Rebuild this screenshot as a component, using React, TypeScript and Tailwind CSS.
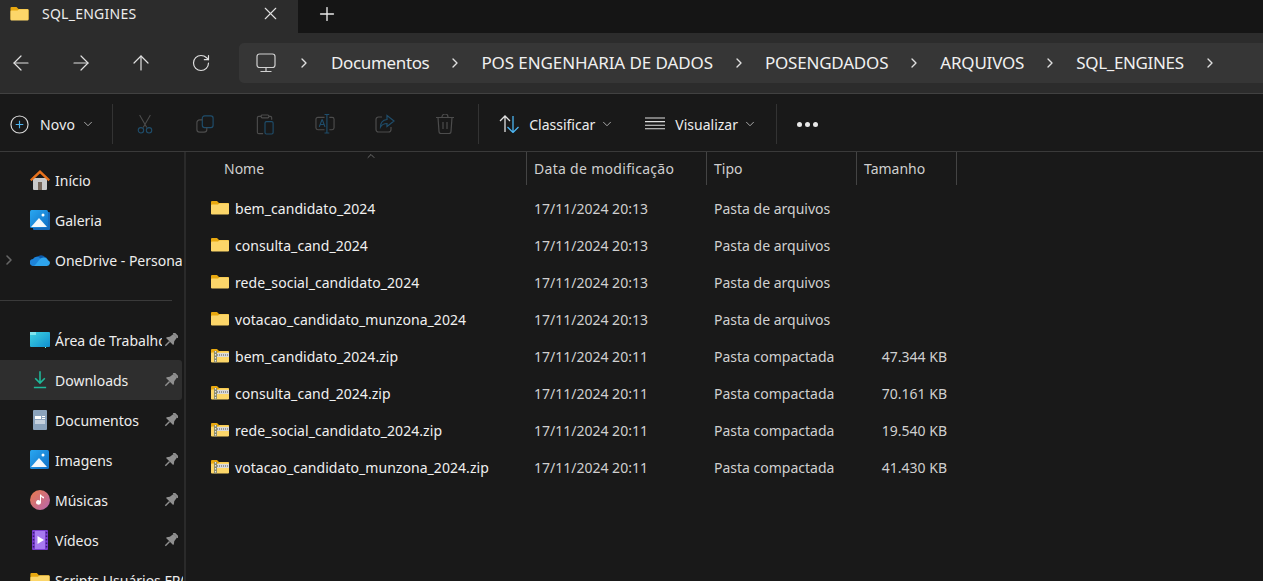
import React from 'react';
import { ArrowLeft, ArrowRight, ArrowUp, ChevronDown, ChevronRight, ChevronUp, Plus, RotateCw, X } from 'lucide-react';

const FONT = "font-['Noto_Sans',sans-serif]";

const FolderIcon: React.FC<{ className?: string }> = ({ className }) => (
    <svg viewBox="0 0 18 15" className={className}>
        <path d="M0 2a1 1 0 0 1 1-1h5l2 2h9a1 1 0 0 1 1 1v9a1 1 0 0 1-1 1H1a1 1 0 0 1-1-1z" fill="#e8a80f" />
        <path d="M0 5.500a1 1 0 0 1 1-1h6l1.600-1.200H17a1 1 0 0 1 1 1V13.500a1 1 0 0 1-1 1H1a1 1 0 0 1-1-1z" fill="#fcd669" />
    </svg>
);

const ZipIcon: React.FC = () => (
    <svg viewBox="0 0 18 15" className="w-[18px] h-[15px]">
        <path d="M0 2a1 1 0 0 1 1-1h5l2 2h9a1 1 0 0 1 1 1v9a1 1 0 0 1-1 1H1a1 1 0 0 1-1-1z" fill="#e8a80f" />
        <path d="M0 5.500a1 1 0 0 1 1-1h6l1.600-1.200H17a1 1 0 0 1 1 1V13.500a1 1 0 0 1-1 1H1a1 1 0 0 1-1-1z" fill="#fcd669" />
        <rect x="4" y="5" width="14" height="4" fill="#d9d9d9" />
        <path d="M4 7h14" stroke="#555" strokeWidth="1.200" strokeDasharray="1 1" />
        <rect x="3" y="3" width="3" height="11.500" fill="#8a8a6a" />
        <path d="M4.500 3v11" stroke="#e6e6e6" strokeWidth="1.200" strokeDasharray="1.500 1.500" />
    </svg>
);

const PinIcon: React.FC = () => (
    <svg viewBox="0 0 14 14" className="w-[14px] h-[14px]">
        <g transform="rotate(45 7 7)" fill="#8f8f8f">
            <rect x="3.500" y="-1" width="7" height="2" rx="0.500" />
            <path d="M4.500 1h5l.6 4.500 1.900 2.500v1H2v-1l1.900-2.500z" />
            <rect x="6.300" y="9" width="1.400" height="6" />
        </g>
    </svg>
);

const HomeIcon = () => (
    <svg viewBox="0 0 20 20" className="w-5 h-5">
        <path d="M3 8h14v11a1 1 0 0 1-1 1H4a1 1 0 0 1-1-1z" fill="#c9c9c9" />
        <rect x="8" y="12" width="4" height="8" fill="#75665a" />
        <path d="M10 0 0 9.500l1.500 1.800L10 3.500l8.500 7.800L20 9.500z" fill="#e8711c" />
    </svg>
);

const PictureIcon: React.FC<{ stacked?: boolean }> = ({ stacked }) => (
    <svg viewBox="0 0 20 20" className="w-5 h-5">
        {stacked && <rect x="3" y="2" width="17" height="18" rx="1" fill="#1668b8" />}
        <defs>
            <linearGradient id="sky" x1="0" y1="0" x2="1" y2="1">
                <stop offset="0" stopColor="#2aa7f0" />
                <stop offset="1" stopColor="#0f6fc6" />
            </linearGradient>
        </defs>
        <rect x="0" y="0" width={stacked ? 18 : 19} height={stacked ? 18 : 19} rx="1.500" fill="url(#sky)" />
        <path d="M1 17 9 8l8 9z" fill="#f2f7fb" />
        <circle cx="13" cy="5" r="1.500" fill="#fff" />
    </svg>
);

const CloudIcon = () => (
    <svg viewBox="0 0 20 12" className="w-5 h-3">
        <path d="M6 4.500a5 4 0 0 1 9-1.500 4 3 0 0 1 2 1.500L8 8z" fill="#0c59a8" />
        <path d="M3.500 12A3.500 3.500 0 0 1 3 5a4.500 4.500 0 0 1 7-1l2.500 2-5 6z" fill="#1d83d8" />
        <path d="M4 12h13a3 3 0 0 0 1-5.800A5 5 0 0 0 9.500 5.500L6 10z" fill="#2ea4ec" />
    </svg>
);

const DesktopIcon = () => (
    <svg viewBox="0 0 20 16" className="w-5 h-4">
        <defs>
            <linearGradient id="desk" x1="0" y1="0" x2="1" y2="1">
                <stop offset="0" stopColor="#3fd3e0" />
                <stop offset="1" stopColor="#0f8fd0" />
            </linearGradient>
        </defs>
        <rect x="0" y="0" width="20" height="15" rx="1" fill="url(#desk)" />
        <rect x="0" y="0" width="6" height="3" fill="#7ee6ee" />
        <rect x="15" y="15" width="1" height="1" fill="#8fc" />
    </svg>
);

const DownloadIcon = () => (
    <svg viewBox="0 0 16 20" className="w-[14px] h-5" fill="none" stroke="#1fb89a" strokeWidth="1.800">
        <path d="M8 0v13M2.500 8 8 13.500 13.500 8M1 18.500h14" />
    </svg>
);

const DocumentIcon = () => (
    <svg viewBox="0 0 14 20" className="w-[14px] h-5">
        <rect width="14" height="20" rx="1" fill="#8ba3bc" />
        <rect x="2" y="6" width="6" height="3" fill="#fff" />
        <path d="M9 6.500h3M9 8.500h3M2 11h10M2 13h10" stroke="#fff" strokeWidth="1" />
    </svg>
);

const MusicIcon = () => (
    <svg viewBox="0 0 20 20" className="w-5 h-5">
        <defs>
            <linearGradient id="music" x1="0" y1="0" x2="1" y2="1">
                <stop offset="0" stopColor="#e9794a" />
                <stop offset="1" stopColor="#b566b0" />
            </linearGradient>
        </defs>
        <circle cx="10" cy="10" r="10" fill="url(#music)" />
        <path d="M10 4.500h1v8a2.500 2.200 0 1 1-1-1.800z" fill="#fff" />
        <path d="M11 4.500c.5 1.500 2 2 3 2.500v1.500c-1.200-.3-2.300-1-3-2z" fill="#fff" />
    </svg>
);

const VideoIcon = () => (
    <svg viewBox="0 0 16 20" className="w-4 h-5">
        <rect width="16" height="20" rx="1" fill="#7b3fd0" />
        <rect x="3" y="1" width="10" height="18" fill="#a77af0" />
        <path d="M5.500 6v8L12 10z" fill="#fff" />
        <path d="M1.500 2v16M14.500 2v16" stroke="#3b1a78" strokeWidth="1.500" strokeDasharray="1.500 2" />
    </svg>
);

const GRAY = '#4c4c4c';
const BLUE = '#1f4d6b';

const CutIcon = () => (
    <svg viewBox="0 0 20 22" className="w-[18px] h-5" fill="none" strokeWidth="1.200">
        <path d="M4 1l8 14M16 1 8 15" stroke={GRAY} />
        <circle cx="5.500" cy="18" r="3" stroke={BLUE} />
        <circle cx="14.500" cy="18" r="3" stroke={BLUE} />
    </svg>
);

const CopyIcon = () => (
    <svg viewBox="0 0 20 20" className="w-[18px] h-[18px]" fill="none" strokeWidth="1.300">
        <rect x="7" y="1" width="12" height="13" rx="2.500" stroke={BLUE} />
        <path d="M7 5.500H4a3 3 0 0 0-3 3V16a3 3 0 0 0 3 3h5a3 3 0 0 0 3-3v-2" stroke={GRAY} />
    </svg>
);

const PasteIcon = () => (
    <svg viewBox="0 0 18 22" className="w-[18px] h-[21px]" fill="none" strokeWidth="1.200">
        <path d="M5 2.500H2.500a1.500 1.500 0 0 0-1.500 1.500v15a1.500 1.500 0 0 0 1.500 1.500H7M13 2.500h1.500A1.500 1.500 0 0 1 16 4v2" stroke={GRAY} />
        <rect x="5" y="1" width="8" height="3" rx="1" stroke={GRAY} />
        <rect x="9" y="8" width="8.500" height="13" rx="1.500" stroke={BLUE} />
    </svg>
);

const RenameIcon = () => (
    <svg viewBox="0 0 21 20" className="w-5 h-5" fill="none" strokeWidth="1.200">
        <path d="M10 3H3a2 2 0 0 0-2 2v9a2 2 0 0 0 2 2h7M15 3h3a2 2 0 0 1 2 2v9a2 2 0 0 1-2 2h-3" stroke={GRAY} />
        <path d="M10 0h5M10 19.500h5M12.500 0v19.500M4.500 13l2.800-7.500h.4L10.500 13M5.500 10.500h4" stroke={BLUE} />
    </svg>
);

const ShareIcon = () => (
    <svg viewBox="0 0 20 20" className="w-5 h-5" fill="none" strokeWidth="1.200">
        <path d="M7 3H3.500A2.500 2.500 0 0 0 1 5.500v10A2.500 2.500 0 0 0 3.500 18h10a2.500 2.500 0 0 0 2.500-2.500V13" stroke={GRAY} />
        <path d="M12 1.500 19 7l-7 5.500V9.500c-3 0-5 1-6.500 3.500 0-4 2.500-7 6.500-7.500z" stroke={BLUE} />
    </svg>
);

const TrashIcon = () => (
    <svg viewBox="0 0 18 20" className="w-[18px] h-5" fill="none" stroke={GRAY} strokeWidth="1.200">
        <path d="M0 3.500h18M6 3.500V3a3 3 0 0 1 6 0v.5M2 3.500l1 14a2 2 0 0 0 2 2h8a2 2 0 0 0 2-2l1-14M7 8v7M11 8v7" />
    </svg>
);

const SortIcon = () => (
    <svg viewBox="0 0 21 18" className="w-[21px] h-[18px]" fill="none" strokeWidth="1.300">
        <path d="M6 17V1M1 6l5-5 5 5" stroke="#e0e0e0" />
        <path d="M14 1v16M8.500 12l5.500 5.500 5.500-5.500" stroke="#4cb4f0" />
    </svg>
);

const ViewIcon = () => (
    <svg viewBox="0 0 20 14" className="w-5 h-[14px]" fill="none" stroke="#e0e0e0" strokeWidth="1.100">
        <path d="M0 1h20M0 4.600h20M0 8.200h20M0 11.800h20" />
    </svg>
);

const NewIcon = () => (
    <svg viewBox="0 0 20 20" className="w-[19px] h-[19px]" fill="none" strokeWidth="1.200">
        <circle cx="10" cy="10" r="9" stroke="#d8d8d8" />
        <path d="M10 6v8M6 10h8" stroke="#4cb4f0" />
    </svg>
);

const MonitorIcon = () => (
    <svg viewBox="0 0 20 20" className="w-5 h-5" fill="none" stroke="#d0d0d0" strokeWidth="1.200">
        <rect x="1" y="1" width="18" height="13.500" rx="2.500" />
        <path d="M10 14.500v4M4.500 18.500h11" />
    </svg>
);

const crumbs = [
    { name: 'Documentos', track: 'tracking-[-0.35px]' },
    { name: 'POS ENGENHARIA DE DADOS', track: 'tracking-[-0.1px]' },
    { name: 'POSENGDADOS', track: 'tracking-[-0.2px]' },
    { name: 'ARQUIVOS', track: 'tracking-[-0.2px]' },
    { name: 'SQL_ENGINES', track: 'tracking-[-0.35px]' },
];

const sidebarTop = [
    { name: 'Início', icon: <HomeIcon />, w: 'w-[129px]' },
    { name: 'Galeria', icon: <PictureIcon stacked />, w: 'w-[129px]' },
    { name: 'OneDrive - Personal', icon: <CloudIcon />, w: 'w-[127px]', chevron: true },
];

const sidebarPinned = [
    { name: 'Área de Trabalho', icon: <DesktopIcon /> },
    { name: 'Downloads', icon: <DownloadIcon />, active: true },
    { name: 'Documentos', icon: <DocumentIcon /> },
    { name: 'Imagens', icon: <PictureIcon /> },
    { name: 'Músicas', icon: <MusicIcon /> },
    { name: 'Vídeos', icon: <VideoIcon /> },
];

const files = [
    { name: 'bem_candidato_2024', date: '17/11/2024 20:13', type: 'Pasta de arquivos', size: '' },
    { name: 'consulta_cand_2024', date: '17/11/2024 20:13', type: 'Pasta de arquivos', size: '' },
    { name: 'rede_social_candidato_2024', date: '17/11/2024 20:13', type: 'Pasta de arquivos', size: '' },
    { name: 'votacao_candidato_munzona_2024', date: '17/11/2024 20:13', type: 'Pasta de arquivos', size: '' },
    { name: 'bem_candidato_2024.zip', date: '17/11/2024 20:11', type: 'Pasta compactada', size: '47.344 KB', zip: true },
    { name: 'consulta_cand_2024.zip', date: '17/11/2024 20:11', type: 'Pasta compactada', size: '70.161 KB', zip: true },
    { name: 'rede_social_candidato_2024.zip', date: '17/11/2024 20:11', type: 'Pasta compactada', size: '19.540 KB', zip: true },
    { name: 'votacao_candidato_munzona_2024.zip', date: '17/11/2024 20:11', type: 'Pasta compactada', size: '41.430 KB', zip: true },
];

const App: React.FC = () => {
    return (
        <div className={`${FONT} w-[1263px] h-[581px] overflow-hidden flex flex-col bg-[#191919] text-[#ededed]`}>
            {/* tabs */}
            <div className="h-[33px] flex items-stretch bg-[#151515] shrink-0">
                <div className="w-[298px] bg-[#2c2c2c] flex items-center pl-[10px] pr-[17px] pb-[7px]">
                    <FolderIcon className="w-[19px] h-[15px]" />
                    <span className="ml-[13px] text-[14px] flex-1 tracking-[0.25px]">SQL_ENGINES</span>
                    <X size={21} strokeWidth={1.3} className="text-[#e0e0e0]" />
                </div>
                <div className="ml-[18px] flex items-center pb-[5px]">
                    <Plus size={22} strokeWidth={1.5} className="text-[#e8e8e8]" />
                </div>
            </div>

            {/* address row */}
            <div className="h-[61px] shrink-0 flex items-center bg-[#2c2c2c] border-b border-[#414141]">
                <div className="w-[239px] flex items-center pl-[9px] gap-9 text-[#e0e0e0] shrink-0">
                    <ArrowLeft size={24} strokeWidth={1.2} />
                    <ArrowRight size={24} strokeWidth={1.2} />
                    <ArrowUp size={24} strokeWidth={1.2} />
                    <RotateCw size={20} strokeWidth={1.4} className="mx-[2px]" />
                </div>
                <div className="flex-1 h-10 bg-[#363636] rounded-l-[5px] flex items-center pl-[17px]">
                    <MonitorIcon />
                    <ChevronRight size={16} strokeWidth={2} className="ml-[20px] mr-[19px] text-[#e0e0e0]" />
                    {crumbs.map((c) => (
                        <React.Fragment key={c.name}>
                            <span className={`text-[17px] text-[#f0f0f0] whitespace-nowrap ${c.track}`}>{c.name}</span>
                            <ChevronRight size={16} strokeWidth={2} className="mx-[18px] text-[#e0e0e0]" />
                        </React.Fragment>
                    ))}
                </div>
            </div>

            {/* toolbar */}
            <div className="h-[58px] shrink-0 flex items-center border-b border-[#3a3a3a] text-[14px] bg-[#191919] pt-[3px]">
                <div className="flex items-center pl-[10px]">
                    <NewIcon />
                    <span className="ml-[11px] tracking-[0.2px]">Novo</span>
                    <ChevronDown size={14} strokeWidth={1.5} className="ml-[6px] text-[#bbb]" />
                </div>
                <div className="w-px h-10 bg-[#333] ml-[17px]" />
                <div className="flex items-center ml-[22px] gap-10">
                    <div className="w-5 flex justify-center"><CutIcon /></div>
                    <div className="w-5 flex justify-center"><CopyIcon /></div>
                    <div className="w-5 flex justify-center"><PasteIcon /></div>
                    <div className="w-5 flex justify-center"><RenameIcon /></div>
                    <div className="w-5 flex justify-center"><ShareIcon /></div>
                    <div className="w-5 flex justify-center"><TrashIcon /></div>
                </div>
                <div className="w-px h-10 bg-[#333] ml-[23px]" />
                <div className="flex items-center ml-[20px]">
                    <SortIcon />
                    <span className="ml-[9px]">Classificar</span>
                    <ChevronDown size={14} strokeWidth={1.5} className="ml-[5px] text-[#bbb]" />
                </div>
                <div className="flex items-center ml-[31px]">
                    <ViewIcon />
                    <span className="ml-[10px]">Visualizar</span>
                    <ChevronDown size={14} strokeWidth={1.5} className="ml-[5px] text-[#bbb]" />
                </div>
                <div className="w-px h-10 bg-[#333] ml-[19px]" />
                <div className="flex items-center gap-[3px] ml-[20px]">
                    <span className="w-[5px] h-[5px] rounded-full bg-[#e8e8e8]" />
                    <span className="w-[5px] h-[5px] rounded-full bg-[#e8e8e8]" />
                    <span className="w-[5px] h-[5px] rounded-full bg-[#e8e8e8]" />
                </div>
            </div>

            <div className="flex-1 flex min-h-0">
                {/* sidebar */}
                <div className="w-[186px] shrink-0 border-r-[2px] border-[#2a2a2a] pt-2 text-[14px] overflow-hidden">
                    {sidebarTop.map((item) => (
                        <div key={item.name} className="h-10 flex items-center relative">
                            {item.chevron && <ChevronRight size={16} strokeWidth={2.4} className="absolute left-[1px] text-[#666]" />}
                            <div className="ml-[30px] w-5 flex justify-center shrink-0">{item.icon}</div>
                            <span className={`ml-[5px] ${item.w} whitespace-nowrap overflow-hidden`}>{item.name}</span>
                        </div>
                    ))}
                    <div className="h-10 flex items-center">
                        <div className="w-[172px] h-px bg-[#3a3a3a]" />
                    </div>
                    {sidebarPinned.map((item) => (
                        <div key={item.name} className={`h-10 w-[182px] flex items-center rounded-r-[3px] ${item.active ? 'bg-[#2e2e2e]' : ''}`}>
                            <div className="ml-[30px] w-5 flex justify-center shrink-0">{item.icon}</div>
                            <span className="ml-[5px] w-[107px] whitespace-nowrap overflow-hidden">{item.name}</span>
                            <div className="ml-[2px]"><PinIcon /></div>
                        </div>
                    ))}
                    <div className="h-10 flex items-center">
                        <div className="ml-[30px] w-5 shrink-0"><FolderIcon className="w-5 h-4" /></div>
                        <span className="ml-[5px] w-[128px] whitespace-nowrap overflow-hidden">Scripts Usuários FR(</span>
                    </div>
                </div>

                {/* file list */}
                <div className="flex-1 text-[14px] min-w-0">
                    <div className="h-[33px] flex items-stretch text-[#cfcfcf] relative">
                        <ChevronUp size={12} strokeWidth={1.300} className="absolute left-[179px] -top-[2px] text-[#999]" />
                        <div className="w-[341px] pl-[38px] flex items-center border-r border-[#444]">Nome</div>
                        <div className="w-[180px] pl-[7px] flex items-center border-r border-[#444] tracking-[0.3px]">Data de modificação</div>
                        <div className="w-[150px] pl-[7px] flex items-center border-r border-[#444]">Tipo</div>
                        <div className="w-[100px] pl-[7px] flex items-center border-r border-[#444]">Tamanho</div>
                    </div>
                    <div className="pt-[5px]">
                        {files.map((f) => (
                            <div key={f.name} className="h-[37px] flex items-center">
                                <div className="w-[341px] pl-[25px] flex items-center shrink-0">
                                    <div className="-mt-[2px] flex">
                                        {f.zip ? <ZipIcon /> : <FolderIcon className="w-[18px] h-[15px]" />}
                                    </div>
                                    <span className="ml-[6px] text-[#f0f0f0] whitespace-nowrap tracking-[0.05px]">{f.name}</span>
                                </div>
                                <div className="w-[180px] pl-[7px] text-[#d0d0d0] shrink-0">{f.date}</div>
                                <div className="w-[150px] pl-[7px] text-[#d0d0d0] shrink-0">{f.type}</div>
                                <div className="w-[90px] text-right text-[#d0d0d0] shrink-0">{f.size}</div>
                            </div>
                        ))}
                    </div>
                </div>
            </div>
        </div>
    );
};

export default App;
